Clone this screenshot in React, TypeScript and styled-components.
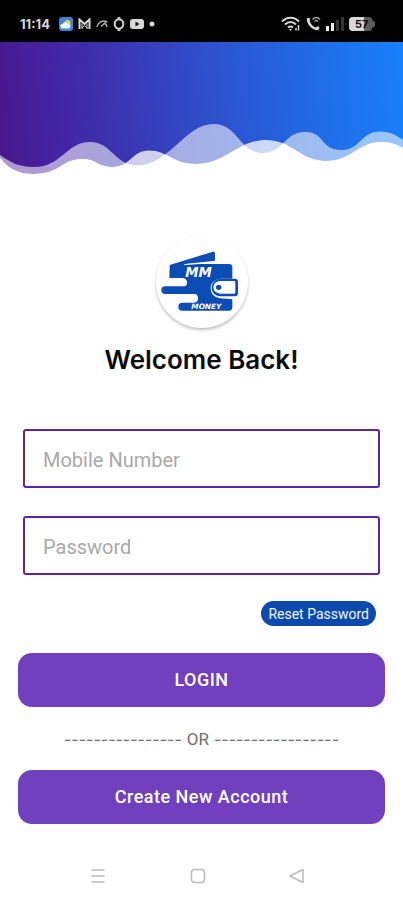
import React from "react";
import styled, { createGlobalStyle } from "styled-components";

const GlobalStyle = createGlobalStyle`
  *, *::before, *::after { box-sizing: border-box; }
  body { margin: 0; background: #fefefe; font-family: Roboto, sans-serif; }
`;

const Screen = styled.div`
  display: flex;
  flex-direction: column;
  min-height: 100vh;
`;

const StatusBar = styled.header`
  display: flex;
  align-items: center;
  justify-content: space-between;
  height: 42px;
  padding: 5px 28px 0 20px;
  background: #000;
  color: #d8d8d8;
`;

const StatusGroup = styled.div<{ $gap: number }>`
  display: flex;
  align-items: center;
  gap: ${(p) => p.$gap}px;
  svg { display: block; }
`;

const Clock = styled.time`
  margin-right: 4px;
  font: 700 13px/16px Inter, sans-serif;
`;

const Waves = styled.svg`
  display: block;
  width: 100%;
  height: 134px;
`;

const Main = styled.main`
  display: flex;
  flex: 1;
  flex-direction: column;
  padding: 60px 18px 0;
`;

const LogoDisc = styled.div`
  align-self: center;
  width: 92px;
  height: 92px;
  border-radius: 50%;
  background: #fff;
  box-shadow: 0 2px 3px rgba(0, 0, 0, 0.24);
  svg { display: block; width: 100%; height: 100%; }
`;

const Title = styled.h1`
  margin: 16px 0 0;
  font: 600 26px/32px Inter, sans-serif;
  color: #0c0c0c;
  text-align: center;
`;

const Form = styled.form`
  display: flex;
  flex-direction: column;
  margin-top: 53px;
`;

const Fields = styled.div`
  display: flex;
  flex-direction: column;
  gap: 28px;
  padding: 0 5px;
`;

const Field = styled.input`
  width: 100%;
  height: 59px;
  padding: 2px 18px 0;
  border: 2px solid #5a25a8;
  border-radius: 3px;
  background: #fff;
  color: #222;
  font: 400 20px/24px Roboto, sans-serif;
  outline: none;
  &::placeholder { color: #a9a9a9; opacity: 1; }
`;

const ResetButton = styled.button`
  align-self: flex-end;
  height: 25px;
  margin: 26px 9px 0 0;
  padding: 0 7px;
  border: 0;
  border-radius: 13px;
  background: #0b49ac;
  color: #f4f6ff;
  font: 400 14px/24px Roboto, sans-serif;
`;

const PrimaryButton = styled.button`
  width: 100%;
  height: 54px;
  border: 0;
  border-radius: 14px;
  background: #7040bf;
  color: #fff;
  font: 500 18px/24px Roboto, sans-serif;
  letter-spacing: 0.5px;
`;

const LoginButton = styled(PrimaryButton)`
  margin-top: 27px;
`;

const Divider = styled.div`
  display: flex;
  align-items: center;
  justify-content: center;
  gap: 5px;
  height: 63px;
  color: #707070;
  font: 400 17px/24px Roboto, sans-serif;
`;

const Dashes = styled.span`
  font: 400 16px/24px Inter, sans-serif;
`;

const NavBar = styled.nav`
  display: flex;
  align-items: center;
  justify-content: space-between;
  height: 48px;
  padding: 0 96px 0 88px;
`;

const NavButton = styled.button`
  display: flex;
  padding: 0;
  border: 0;
  background: none;
  color: #bcbcbc;
`;

const backWave =
  "M0 113C10 120 18 125 34 125C62 125 66 100 90 100C112 100 114 123 137 123.500C170 123.500 184 82 214 82C238 82 239 111 263 111C284 111 284 90 305 90C326 90 319 108 342 108C360 108 361 89.500 380 89.500C390 89.500 396 93 403 98V134H0Z";
const frontWave =
  "M0 116C8 126 17 132 34 132C60 132 62 117 82 117C96 117 98 125 113 125C130 125 132 108.500 149 108.500C168 108.500 172 122 196 122C226 122 238 98 266 98C292 98 300 119 326 119C352 119 358 100 381 100C390 100 396 102 403 106V134H0Z";

const HeaderWaves = () => (
  <Waves viewBox="0 0 403 134" preserveAspectRatio="none" aria-hidden="true">
    <defs>
      <linearGradient id="sky" gradientUnits="userSpaceOnUse" x1="0" y1="90" x2="403" y2="50">
        <stop offset="0" stopColor="#49188f" />
        <stop offset="0.12" stopColor="#44229f" />
        <stop offset="0.3" stopColor="#3b35b2" />
        <stop offset="0.5" stopColor="#304dca" />
        <stop offset="0.75" stopColor="#2168e2" />
        <stop offset="1" stopColor="#197ffa" />
      </linearGradient>
      <clipPath id="overlap">
        <path d={backWave} />
      </clipPath>
    </defs>
    <path fill="url(#sky)" d="M0 0H403V134H0Z" />
    <path fill="#fff" fillOpacity="0.56" d={backWave} />
    <path fill="#fff" fillOpacity="0.76" d={frontWave} />
    <path fill="#fefefe" clipPath="url(#overlap)" d={frontWave} />
    <path fill="#fefefe" d="M0 133H403V134H0Z" />
  </Waves>
);

const WalletLogo = () => (
  <svg viewBox="44 17 276 276" role="img" aria-label="MM Money">
    <g fill="#0b4db5">
      <path d="M85 104L215 64Q221 63 221 69V91L132 101L122 143H85Z" />
      <path d="M132 101H263Q273 101 273 111V145H236Q208 151 208 172Q208 199 236 204L273 207V230Q273 241 263 241H123Q111 241 111 229Q111 217 123 217H158Q170 217 170 204Q170 191 158 191H72Q60 191 60 179Q60 168 72 168H126Q137 168 137 157Q137 143 122 143H85V120Z" />
      <path d="M234 145H280Q290 145 290 155V188Q290 198 280 198H234Q211 193 211 172Q211 151 234 145Z" />
    </g>
    <path d="M129 103L220 96" stroke="#fff" strokeWidth="3" />
    <path fill="#fff" d="M236 152H278Q282 152 282 156V186Q282 190 278 190H236Q216 187 216 171Q216 155 236 152Z" />
    <circle cx="232" cy="171" r="8" fill="#0b4db5" />
    <text x="132" y="139" fill="#fff" fontFamily="DejaVu Sans, sans-serif" fontSize="40" fontWeight="700" fontStyle="italic">MM</text>
    <text x="150" y="237" fill="#fff" fontFamily="DejaVu Sans, sans-serif" fontSize="22" fontWeight="700" fontStyle="italic">MONEY</text>
  </svg>
);

const NotificationIcons = () => (
  <>
    <svg width="14" height="14" viewBox="0 0 14 14">
      <rect width="14" height="14" rx="3" fill="#3c83dc" />
      <circle cx="8.500" cy="6" r="3" fill="#f3cf3d" />
      <path d="M3 11.500a2.300 2.300 0 0 1 .4-4.500a3 3 0 0 1 5.400 0a2.300 2.300 0 0 1 1 4.500Z" fill="#f1f6fc" />
    </svg>
    <svg width="13" height="12" viewBox="0 0 13 12" fill="none" stroke="currentColor">
      <path d="M1.500 11V1.500L6.500 6L11.500 1.500V11" strokeWidth="2" />
      <path d="M4 11V5.500M9 11V5.500M4 10L6.500 7.500L9 10" strokeWidth="1" />
    </svg>
    <svg width="12" height="10" viewBox="0 0 12 10" fill="none" stroke="#a8a8a8" strokeWidth="1.500">
      <path d="M.8 8C2 3.500 6 1 10.500 2.500L5 7.500M8 4.500C10 4 10.500 6 11 8" />
    </svg>
    <svg width="12" height="14" viewBox="0 0 12 14" fill="none" stroke="currentColor">
      <ellipse cx="6" cy="7" rx="4.300" ry="4.800" strokeWidth="2" />
      <path d="M4.500 1.500L6 .5L7.500 1.500M4.500 12.500L6 13.500L7.500 12.500" strokeWidth="1.500" />
    </svg>
    <svg width="14" height="12" viewBox="0 0 14 12">
      <rect y="1" width="14" height="10" rx="3" fill="currentColor" />
      <path d="M5.500 3.500L9.500 6L5.500 8.500Z" fill="#111" />
    </svg>
    <svg width="6" height="6" viewBox="0 0 6 6">
      <circle cx="3" cy="3" r="2.500" fill="currentColor" />
    </svg>
  </>
);

const SystemIcons = () => (
  <>
    <svg width="20" height="16" viewBox="0 0 20 16" fill="none" stroke="currentColor" strokeWidth="2">
      <path d="M1 5.500C6 .5 13 .5 18 5.500M4 8.500C7.500 5 11.500 5 15 8.500M7 11.500Q9.500 9.500 12 11.500" />
      <path d="M8 13L9.500 15L11 13Z" fill="currentColor" stroke="none" />
      <path d="M17.500 9V14.500M15 12V14.500" strokeWidth="1.500" />
    </svg>
    <svg width="15" height="15" viewBox="0 0 15 15" fill="none" stroke="currentColor">
      <path d="M2 2.500C2 8 7 13.500 12.500 13" strokeWidth="2.500" />
      <path d="M2.500 2V5.500M9.500 13L13 11" strokeWidth="2.500" />
      <path d="M6.500 3.500Q10.500 -.5 14 3.500M8.500 5.500Q10.500 3.500 12 5.500" stroke="#a0a0a0" strokeWidth="1.500" />
    </svg>
    <svg width="18" height="15" viewBox="0 0 18 15">
      <path d="M0 10H3V15H0ZM5 7H8V15H5Z" fill="#eee" />
      <path d="M10 4H13V15H10ZM15 1H18V15H15Z" fill="#343434" />
    </svg>
    <svg width="26" height="14" viewBox="0 0 26 14">
      <path d="M4 0H20Q23 0 23 3L26 5V9L23 11Q23 14 20 14H4Q0 14 0 10V4Q0 0 4 0Z" fill="#5c5c5c" />
      <path d="M4 0H15V14H4Q0 14 0 10V4Q0 0 4 0Z" fill="#d8d8d8" />
      <text x="6" y="11" fill="#111" fontFamily="Inter, sans-serif" fontSize="11" fontWeight="700">57</text>
    </svg>
  </>
);

export default function App() {
  return (
    <>
      <GlobalStyle />
      <Screen>
        <StatusBar>
          <StatusGroup $gap={5}>
            <Clock>11:14</Clock>
            <NotificationIcons />
          </StatusGroup>
          <StatusGroup $gap={5}>
            <SystemIcons />
          </StatusGroup>
        </StatusBar>
        <HeaderWaves />
        <Main>
          <LogoDisc>
            <WalletLogo />
          </LogoDisc>
          <Title>Welcome Back!</Title>
          <Form onSubmit={(e) => e.preventDefault()}>
            <Fields>
              <Field type="tel" placeholder="Mobile Number" aria-label="Mobile Number" />
              <Field type="password" placeholder="Password" aria-label="Password" />
            </Fields>
            <ResetButton type="button">Reset Password</ResetButton>
            <LoginButton type="submit">LOGIN</LoginButton>
          </Form>
          <Divider>
            <Dashes>----------------</Dashes>
            OR
            <Dashes>-----------------</Dashes>
          </Divider>
          <PrimaryButton type="button">Create New Account</PrimaryButton>
        </Main>
        <NavBar>
          <NavButton aria-label="Recent apps">
            <svg width="20" height="18" viewBox="0 0 20 18" fill="none" stroke="currentColor" strokeWidth="1.500">
              <path d="M3.500 3H16.500M3.500 9H16.500M3.500 15H16.500" />
            </svg>
          </NavButton>
          <NavButton aria-label="Home">
            <svg width="20" height="18" viewBox="0 0 20 18" fill="none" stroke="currentColor" strokeWidth="1.500">
              <rect x="3.500" y="2.500" width="13" height="13" rx="3" />
            </svg>
          </NavButton>
          <NavButton aria-label="Back">
            <svg width="20" height="18" viewBox="0 0 20 18" fill="none" stroke="currentColor" strokeWidth="1.500" strokeLinejoin="round">
              <path d="M3 9L16 2.500V15.500Z" />
            </svg>
          </NavButton>
        </NavBar>
      </Screen>
    </>
  );
}
